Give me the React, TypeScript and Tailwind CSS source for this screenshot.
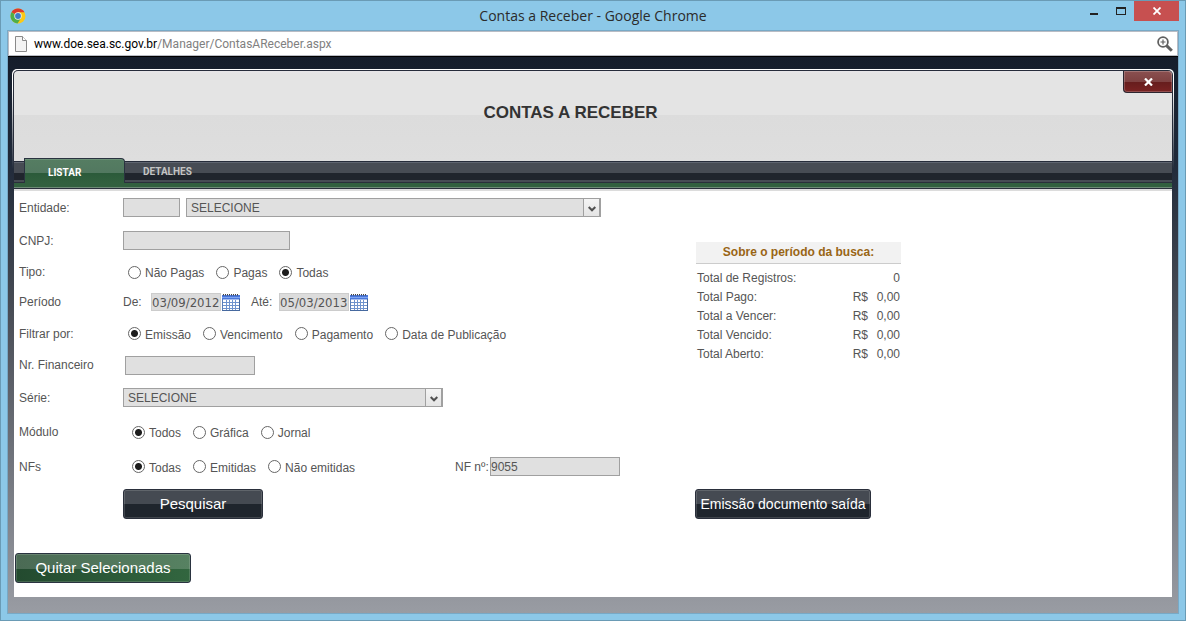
import { useState, type ReactNode } from "react";

const FIELD =
  "h-[19px] rounded-none border border-[#a0a0a0] bg-[#e0e0e0] text-[#555] outline-none";

const TOTALS = [
  { label: "Total de Registros:", currency: "", value: "0" },
  { label: "Total Pago:", currency: "R$", value: "0,00" },
  { label: "Total a Vencer:", currency: "R$", value: "0,00" },
  { label: "Total Vencido:", currency: "R$", value: "0,00" },
  { label: "Total Aberto:", currency: "R$", value: "0,00" },
];

export default function App() {
  return (
    <div className="flex min-h-screen flex-col border border-[#6a9bb5] bg-[#8cc8e8] font-['Liberation_Sans',Arial,sans-serif] text-xs text-[#555]">
      <TitleBar />
      <div className="mx-[6px] mb-[6px] flex flex-1 flex-col border border-[#78a9c6]">
        <AddressBar />
        <main className="flex-1 border-t border-black bg-[linear-gradient(#151d2b,#1f2939_18%,#474c55_45%,#999ca3)] px-1 pt-3 pb-4">
          <div className="rounded-t-[5px] bg-[linear-gradient(#fff_20px,transparent_100px)] px-px pt-px">
            <div className="rounded-t-[5px] bg-[linear-gradient(#262c3a_80px,transparent_110px)] px-px pt-px">
              <PanelHeader />
              <Tabs />
              <SearchForm />
            </div>
          </div>
        </main>
      </div>
    </div>
  );
}

function TitleBar() {
  return (
    <header className="flex h-[29px] items-start pl-[9px] font-['Open_Sans','Noto_Sans',sans-serif] text-[#2b2b2b]">
      <ChromeLogo />
      <h1 className="flex-1 pl-20 text-center text-sm leading-[29px]">
        Contas a Receber - Google Chrome
      </h1>
      <button aria-label="Minimizar" className="flex h-5 w-[27px] items-center justify-center">
        <svg width="8" height="8" viewBox="0 0 8 8">
          <path d="M0 6h8v2H0z" fill="#222" />
        </svg>
      </button>
      <button aria-label="Maximizar" className="flex h-5 w-[27px] items-center justify-center">
        <svg width="10" height="8" viewBox="0 0 10 8">
          <path d="M0 0h10v8H0zM1 2v5h8V2z" fill="#222" fillRule="evenodd" />
        </svg>
      </button>
      <button
        aria-label="Fechar janela"
        className="mr-[6px] flex h-5 w-[45px] items-center justify-center bg-[#c75050]"
      >
        <svg width="8" height="8" viewBox="0 0 8 8" stroke="#fff" strokeWidth="1.8">
          <path d="M.5.5l7 7M7.5.5l-7 7" />
        </svg>
      </button>
    </header>
  );
}

function AddressBar() {
  return (
    <div className="flex h-[25px] items-center border border-[#b9bcc4] bg-white pr-1 pl-[6px] font-[Roboto,'Open_Sans',sans-serif]">
      <svg width="12" height="16" viewBox="0 0 12 16" fill="#f4f4f4" stroke="#8a8a8a">
        <path d="M.5.5h7l4 4v11H.5z" />
        <path d="M7.5.5v4h4" fill="#fff" />
      </svg>
      <span className="flex-1 pl-[7px] text-black">
        www.doe.sea.sc.gov.br
        <span className="text-[#808080]">/Manager/ContasAReceber.aspx</span>
      </span>
      <button aria-label="Zoom">
        <svg width="16" height="16" viewBox="0 0 16 16" fill="none" stroke="#606060">
          <circle cx="6" cy="6" r="4.9" strokeWidth="1.8" />
          <path d="M3.5 6h5M6 3.5v5" strokeWidth="1.2" />
          <path d="M9.6 9.600l5.200 5.200" strokeWidth="3" />
        </svg>
      </button>
    </div>
  );
}

function PanelHeader() {
  return (
    <div className="flex h-[90px] items-start rounded-t-[4px] bg-[linear-gradient(#e7e5e8,#e4e4e4_3px,#e4e4e4_44px,#dcdcdc_44px,#dedede)]">
      <h2 className="flex-1 pt-[30px] pl-1 text-center text-[17px] leading-6 font-bold text-[#333]">
        CONTAS A RECEBER
      </h2>
      <button
        aria-label="Fechar"
        className="flex h-[22px] w-[49px] items-center justify-center rounded-tr-[4px] rounded-bl-[4px] border border-t-0 border-r-0 border-[#2c2630] bg-[linear-gradient(#8a5050,#7e4141_11px,#661d1d_11px,#7a2323)] inset-shadow-[0_0_0_1px_rgba(255,255,255,0.2)]"
      >
        <svg width="9" height="8" viewBox="0 0 9 8" stroke="#fff" strokeWidth="2.2">
          <path d="M1 .5l7 7M8 .5l-7 7" />
        </svg>
      </button>
    </div>
  );
}

function Tabs() {
  return (
    <nav>
      <div className="flex h-[22px] items-end bg-[linear-gradient(#262c3a_1px,#5f6570_1px,#5f6570_2px,#474c54_2px,#474c54_12px,#20252d_12px,#20252d_19px,#474c54_19px,#474c54_21px,#2a2f3b_21px)] pl-[10px] font-[Roboto,'Liberation_Sans',sans-serif] text-[10px] font-bold">
        <a
          href="#listar"
          className="flex h-[25px] w-[101px] items-center rounded-tr-[4px] border border-b-0 border-[#2a3340] bg-[linear-gradient(#557d62,#527860_14px,#2b5a3a_14px,#32603f)] pt-[3px] pl-[23px] text-white inset-shadow-[0_1px_0_0_#6b9177]"
        >
          LISTAR
        </a>
        <a href="#detalhes" className="flex h-[22px] items-center px-[18px] text-[#c4c4c4]">
          DETALHES
        </a>
      </div>
      <div className="h-2 bg-[linear-gradient(#32603f_4px,#6d8a76_4px,#6d8a76_5px,#2a2f3b_5px,#2a2f3b_6px,#dcdcdc_6px)]" />
    </nav>
  );
}

function SearchForm() {
  return (
    <form className="bg-white pb-[14px]" onSubmit={(e) => e.preventDefault()}>
      <div className="flex pl-[5px]">
        <div className="w-[676px] shrink-0">
          <Row label="Entidade:" htmlFor="entidade" height="h-[33px]">
            <input id="entidade" className={`${FIELD} w-[57px]`} />
            <Select label="Entidade selecionada" className="ml-[6px] w-[415px]" />
          </Row>
          <Row label="CNPJ:" htmlFor="cnpj" height="h-[33px]">
            <input id="cnpj" className={`${FIELD} w-[167px]`} />
          </Row>
          <Row label="Tipo:" height="h-[30px]">
            <RadioGroup name="tipo" options={["Não Pagas", "Pagas", "Todas"]} initial="Todas" />
          </Row>
          <Row label="Período" height="h-[30px]">
            <div className="flex gap-[11px]">
              <DateField id="de" label="De:" value="03/09/2012" />
              <DateField id="ate" label="Até:" value="05/03/2013" />
            </div>
          </Row>
          <Row label="Filtrar por:" height="h-[33px]">
            <RadioGroup
              name="filtro"
              options={["Emissão", "Vencimento", "Pagamento", "Data de Publicação"]}
              initial="Emissão"
            />
          </Row>
          <Row label="Nr. Financeiro" htmlFor="financeiro" height="h-[30px]">
            <input id="financeiro" className={`${FIELD} ml-[2px] w-[130px]`} />
          </Row>
          <Row label="Série:" height="h-[35px]">
            <Select label="Série" className="w-[320px]" />
          </Row>
          <Row label="Módulo" height="h-[34px]">
            <div className="pl-1">
              <RadioGroup name="modulo" options={["Todos", "Gráfica", "Jornal"]} initial="Todos" />
            </div>
          </Row>
          <Row label="NFs" height="h-[35px]">
            <div className="w-[332px] pl-1">
              <RadioGroup
                name="nfs"
                options={["Todas", "Emitidas", "Não emitidas"]}
                initial="Todas"
              />
            </div>
            <label htmlFor="nf" className="w-[35px]">
              NF nº:
            </label>
            <input id="nf" defaultValue="9055" className={`${FIELD} w-[130px]`} />
          </Row>
          <div className="mt-[5px] pl-[104px]">
            <DarkButton className="w-[140px] text-[15px]">Pesquisar</DarkButton>
          </div>
        </div>

        <div className="flex flex-col items-start pt-[51px]">
          <Summary />
          <DarkButton className="mt-auto w-[176px] text-sm">Emissão documento saída</DarkButton>
        </div>
      </div>

      <button
        type="button"
        className="mt-[34px] ml-px h-[30px] w-[176px] rounded-[3px] border border-[#2a3340] bg-[linear-gradient(rgba(255,255,255,0.18)_15px,transparent_15px),linear-gradient(90deg,#234a2f,#32663f)] text-[15px] text-white inset-shadow-[0_0_0_1px_rgba(255,255,255,0.15)]"
      >
        Quitar Selecionadas
      </button>
    </form>
  );
}

function Row({
  label,
  htmlFor,
  height,
  children,
}: {
  label: string;
  htmlFor?: string;
  height: string;
  children: ReactNode;
}) {
  return (
    <div className={`flex items-center ${height}`}>
      {htmlFor ? (
        <label htmlFor={htmlFor} className="w-[104px] shrink-0">
          {label}
        </label>
      ) : (
        <span className="w-[104px] shrink-0">{label}</span>
      )}
      {children}
    </div>
  );
}

function RadioGroup({
  name,
  options,
  initial,
}: {
  name: string;
  options: string[];
  initial: string;
}) {
  const [value, setValue] = useState(initial);

  return (
    <div className="flex gap-3 pl-[5px]">
      {options.map((option) => (
        <label key={option} className="flex items-center gap-1">
          <input
            type="radio"
            name={name}
            checked={value === option}
            onChange={() => setValue(option)}
            className="size-[13px] shrink-0 appearance-none rounded-full border border-[#666] bg-white checked:bg-[radial-gradient(circle,#1c1c1c_3px,#fff_4px)]"
          />
          <span className="pt-[2px]">{option}</span>
        </label>
      ))}
    </div>
  );
}

function Select({ label, className }: { label: string; className: string }) {
  return (
    <div className={`relative ${className}`}>
      <select aria-label={label} className={`${FIELD} block w-full appearance-none pl-1`}>
        <option>SELECIONE</option>
      </select>
      {/* Drop-down arrow, drawn over the native control */}
      <span className="pointer-events-none absolute inset-y-0 right-0 flex w-[18px] items-center justify-center border border-r-2 border-[#a0a0a0] bg-linear-to-b from-[#f4f4f4] to-[#e4e4e4] pt-[2px]">
        <svg width="8" height="6" viewBox="0 0 8 6" fill="none" stroke="#505050" strokeWidth="2">
          <path d="M.7 1L4 4.300 7.300 1" />
        </svg>
      </span>
    </div>
  );
}

function DateField({ id, label, value }: { id: string; label: string; value: string }) {
  return (
    <div className="flex items-center">
      <label htmlFor={id} className="w-7">
        {label}
      </label>
      <input
        id={id}
        defaultValue={value}
        className="h-[18px] w-[70px] border border-[#ccc] bg-[#dcdcdc] font-['DejaVu_Sans_Condensed','Open_Sans',sans-serif] text-[13px] outline-none"
      />
      <button type="button" aria-label={`Calendário ${label}`} className="ml-px">
        <CalendarIcon />
      </button>
    </div>
  );
}

function Summary() {
  return (
    <table className="ml-px w-[205px]">
      <caption className="mb-1 h-[22px] border-b border-[#ccc] bg-[#f2f2f2] text-xs leading-[20px] font-bold text-[#996515]">
        Sobre o período da busca:
      </caption>
      <tbody>
        {TOTALS.map((row) => (
          <tr key={row.label} className="h-[19px]">
            <td className="p-0 pl-px">{row.label}</td>
            <td className="p-0 text-right">{row.currency}</td>
            <td className="w-[33px] p-0 pr-px text-right">{row.value}</td>
          </tr>
        ))}
      </tbody>
    </table>
  );
}

function DarkButton({ className, children }: { className: string; children: ReactNode }) {
  return (
    <button
      type="button"
      className={`block h-[30px] rounded-[3px] border border-[#2a2f3b] bg-[linear-gradient(#454a52_14px,#1f252d_14px)] whitespace-nowrap text-white inset-shadow-[0_0_0_1px_rgba(255,255,255,0.15)] ${className}`}
    >
      {children}
    </button>
  );
}

function CalendarIcon() {
  return (
    <svg width="18" height="17" viewBox="0 0 18 17">
      <path d="M.5 1.500h17v15H.5z" fill="#fff" stroke="#5b7fb8" />
      <path d="M0 1h18v4.500H0z" fill="#4a78dc" />
      <path d="M0 3h18v1H0z" fill="#7fa4f0" />
      <path d="M1 .8h16" stroke="#444" strokeWidth="1.600" strokeDasharray="1 1" />
      <path
        d="M1 8.500h16M1 11.500h16M1 14.500h16M4.500 6v10M7.500 6v10M10.500 6v10M13.500 6v10"
        stroke="#6f93cd"
      />
      <path d="M0 16.500h18M17.500 5v12" stroke="#46699f" />
    </svg>
  );
}

function ChromeLogo() {
  return (
    <svg className="mt-[7px]" width="16" height="16" viewBox="0 0 16 16">
      <circle cx="8" cy="8" r="7.500" fill="#fbc916" />
      <path d="M8 8L1.500 4.250A7.500 7.500 0 0 1 14.500 4.250H8z" fill="#dc3a2c" />
      <path d="M8 8L1.500 4.250A7.500 7.500 0 0 0 7.500 15.500L11.200 9.800z" fill="#4fae48" />
      <circle cx="8" cy="8" r="3.700" fill="#f1f1f1" />
      <circle cx="8" cy="8" r="2.900" fill="#3d7cc9" />
    </svg>
  );
}
